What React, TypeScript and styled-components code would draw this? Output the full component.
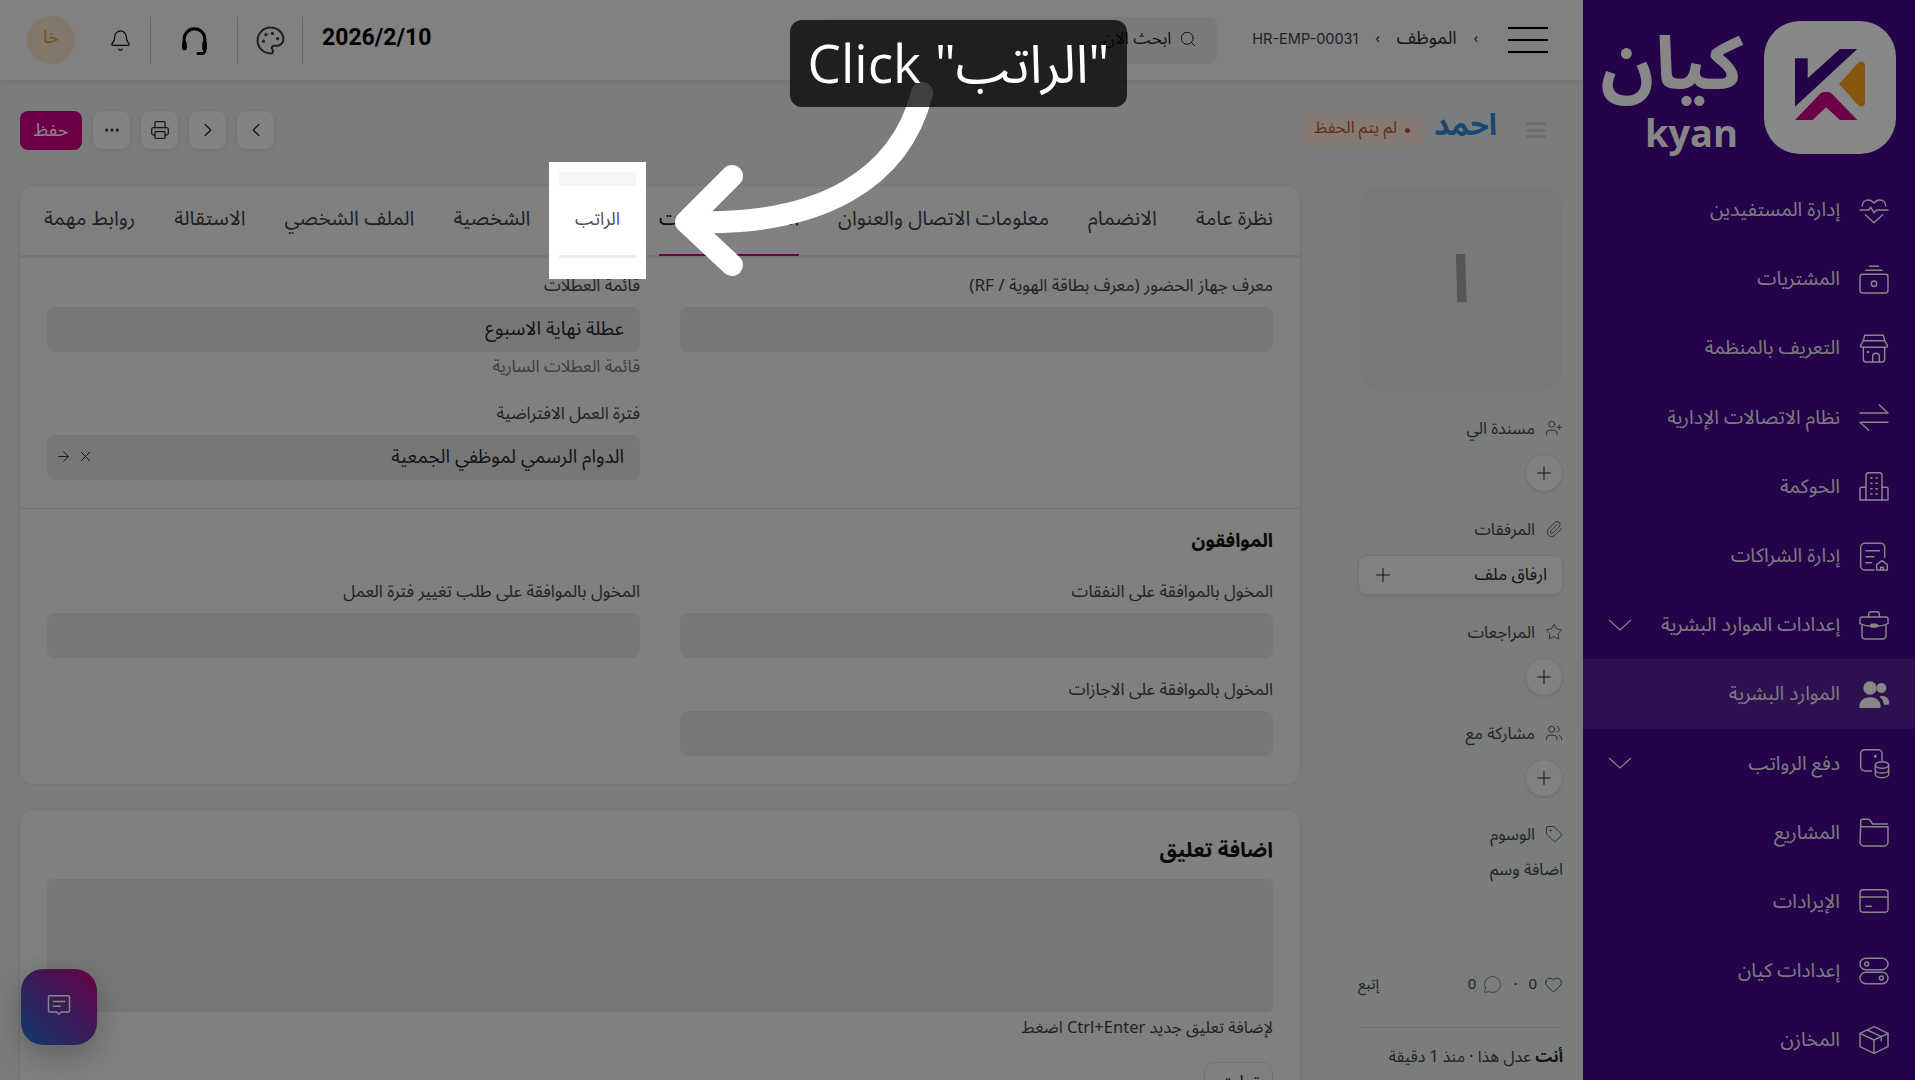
import React from "react";
import styled, { createGlobalStyle } from "styled-components";
import {
  ArrowRight,
  Bell,
  ChevronLeft,
  ChevronRight,
  Heart,
  MessageCircle,
  MoreHorizontal,
  Palette,
  Paperclip,
  Plus,
  Printer,
  Search,
  Star,
  Tag,
  UserPlus,
  Users,
  X,
} from "lucide-react";

const GlobalStyle = createGlobalStyle`
  html, body {
    margin: 0;
    padding: 0;
    height: 100%;
    overflow: hidden;
    direction: rtl;
    background: #e8ecea;
    font-family: "Noto Sans Arabic", "Noto Sans", "DejaVu Sans", sans-serif;
  }
  * { box-sizing: border-box; }
`;

const Svg = ({ children }: { children: React.ReactNode }) => (
  <svg
    width="32"
    height="32"
    viewBox="0 0 24 24"
    fill="none"
    stroke="currentColor"
    strokeWidth="1.1"
    strokeLinecap="round"
    strokeLinejoin="round"
  >
    {children}
  </svg>
);

const navItems = [
  {
    label: "إدارة المستفيدين",
    icon: (
      <Svg>
        <path d="M1.5 12h6.5l1.5-2 2.5 4 2-2h8.5" />
        <path d="M3.2 9C3.2 6 5.4 4.5 7.6 4.5c1.8 0 3.4 1 4.4 2.3 1-1.3 2.6-2.3 4.4-2.3 2.2 0 4.4 1.5 4.4 4.5" />
        <path d="M5.5 15.5l6.5 6 6.5-6" />
      </Svg>
    ),
  },
  {
    label: "المشتريات",
    icon: (
      <Svg>
        <path d="M8.5 2.5h7M6 5.5h12" />
        <rect x="1.5" y="8.5" width="21" height="14" rx="2" />
        <circle cx="12" cy="15.5" r="2" />
      </Svg>
    ),
  },
  {
    label: "التعريف بالمنظمة",
    icon: (
      <Svg>
        <path d="M5 2.5h14l1 4 2 3.5c.4 1-.2 1.5-1 1.5H3c-.8 0-1.4-.5-1-1.5L4 6.5z" />
        <path d="M4 6.5h16" />
        <path d="M4 11.5v9a2 2 0 0 0 2 2h12a2 2 0 0 0 2-2v-9" />
        <path d="M11 22.5v-4a2.5 2.5 0 0 1 5 0v4" />
        <circle cx="7.5" cy="15" r=".4" />
      </Svg>
    ),
  },
  {
    label: "نظام الاتصالات الإدارية",
    icon: (
      <Svg>
        <path d="M1.5 9h21l-6.5-6" />
        <path d="M22.5 16h-21l6.5 6" />
      </Svg>
    ),
  },
  {
    label: "الحوكمة",
    icon: (
      <Svg>
        <path d="M6 22.5V4a2 2 0 0 1 2-2h8a2 2 0 0 1 2 2v18.5" />
        <path d="M6 13H2.5a1 1 0 0 0-1 1v8.5h21V14a1 1 0 0 0-1-1H18" />
        <path d="M9.5 6h1M13.5 6h1M9.5 10h1M13.5 10h1M9.5 14h1M13.5 14h1M9.5 18h1M13.5 18h1" />
      </Svg>
    ),
  },
  {
    label: "إدارة الشراكات",
    icon: (
      <Svg>
        <path d="M12 22.5H5a3 3 0 0 1-3-3v-14a3 3 0 0 1 3-3h12a3 3 0 0 1 3 3V13" />
        <path d="M6 8h10M6 12.5h6M6 17h4" />
        <path d="M14 22.5v-4l4-3 4 3v4z" />
        <path d="M17 22.5v-2h2v2" />
      </Svg>
    ),
  },
  {
    label: "إعدادات الموارد البشرية",
    icon: (
      <Svg>
        <path d="M8 6V4a2 2 0 0 1 2-2h4a2 2 0 0 1 2 2v2" />
        <path d="M3 6h18a1.5 1.5 0 0 1 1.5 1.5V11c-3 1.5-6 2-8.5 2h-4c-2.5 0-5.5-.5-8.5-2V7.5A1.5 1.5 0 0 1 3 6z" />
        <path d="M3 12.5V20a2.5 2.5 0 0 0 2.5 2.5h13A2.5 2.5 0 0 0 21 20v-7.5" />
        <rect x="9.5" y="11.5" width="5" height="2" rx="1" fill="currentColor" />
      </Svg>
    ),
  },
  {
    label: "الموارد البشرية",
    active: true,
    icon: (
      <svg width="32" height="32" viewBox="0 0 24 24" fill="currentColor">
        <circle cx="9" cy="7.5" r="5" />
        <path d="M1 21.5c0-4.5 3.5-7 8-7s8 2.5 8 7c0 .5-.5 1-1 1H2c-.5 0-1-.5-1-1z" />
        <circle cx="17.5" cy="7.5" r="3.8" />
        <path d="M18.5 13.5c3 .3 5 2.5 5 5.5 0 .6-.4 1-1 1h-3c-.3-2.5-1.5-4.8-3.5-6 .8-.3 1.6-.5 2.5-.5z" />
      </svg>
    ),
  },
  {
    label: "دفع الرواتب",
    icon: (
      <Svg>
        <path d="M10 18H5a3 3 0 0 1-3-3V5a3 3 0 0 1 3-3h10a3 3 0 0 1 3 3v5" />
        <circle cx="13" cy="7" r=".6" fill="currentColor" />
        <ellipse cx="18" cy="13.5" rx="5" ry="2.5" />
        <path d="M13 13.5v7c0 1.4 2.2 2.5 5 2.5s5-1.1 5-2.5v-7M13 17c0 1.4 2.2 2.5 5 2.5s5-1.1 5-2.5" />
      </Svg>
    ),
  },
  {
    label: "المشاريع",
    icon: (
      <Svg>
        <path d="M2 8V4a1.5 1.5 0 0 1 1.5-1.5h5L11 6h11" />
        <path d="M2 8h20.5v11.5a3 3 0 0 1-3 3h-15a3 3 0 0 1-3-3z" />
      </Svg>
    ),
  },
  {
    label: "الإيرادات",
    icon: (
      <Svg>
        <rect x="1.5" y="3.5" width="21" height="17" rx="2.5" />
        <path d="M1.5 9h21M6 16h4" />
      </Svg>
    ),
  },
  {
    label: "إعدادات كيان",
    icon: (
      <Svg>
        <rect x="1.5" y="2.5" width="21" height="8.5" rx="4.25" />
        <rect x="1.5" y="13" width="21" height="8.5" rx="4.25" />
        <circle cx="6.5" cy="6.75" r="1.5" />
        <circle cx="17.5" cy="17.25" r="1.5" />
      </Svg>
    ),
  },
  {
    label: "المخازن",
    icon: (
      <Svg>
        <path d="M12 2l10.5 5v10L12 22 1.5 17V7z" />
        <path d="M1.5 7L12 12l10.5-5M12 12v10" />
        <path d="M7 4.5l10.5 5v3" />
      </Svg>
    ),
  },
];

const tabs = [
  "نظرة عامة",
  "الانضمام",
  "معلومات الاتصال والعنوان",
  "الحضور والإجازات",
  "الراتب",
  "الشخصية",
  "الملف الشخصي",
  "الاستقالة",
  "روابط مهمة",
];

const Expand = () => (
  <ExpandIcon viewBox="0 0 24 14" fill="none" stroke="currentColor" strokeWidth="1.2">
    <path d="M1 2l11 10L23 2" />
  </ExpandIcon>
);

const App = () => {
  return (
    <Page>
      <GlobalStyle />
      <Sidebar>
        <LogoRow>
          <LogoWords>
            <LogoArabic>كيان</LogoArabic>
            <LogoLatin>kyan</LogoLatin>
          </LogoWords>
          <LogoTile>
            <svg width="132" height="133" viewBox="0 0 132 133">
              <path d="M31 37.3h12.7v20L76 28h17.3L31 85.7z" fill="#44078c" />
              <path d="M75 63l19-21c2.5-2.5 7-1.5 7 2v38c0 3.5-4.5 5-7 2z" fill="#fba41c" />
              <path d="M31 99l25-26c3-3 9-3 12 0l25.3 26H76L62 86.3 48.7 99z" fill="#ca0086" />
            </svg>
          </LogoTile>
        </LogoRow>
        <Nav>
          {navItems.map((item, i) => (
            <NavItem key={i} $active={item.active}>
              <NavIcon>{item.icon}</NavIcon>
              <NavLabel>{item.label}</NavLabel>
              {(i === 6 || i === 8) && <Expand />}
            </NavItem>
          ))}
        </Nav>
      </Sidebar>

      <Main>
        <Topbar>
          <MenuLines>
            <span />
            <span />
            <span />
          </MenuLines>
          <Crumbs>
            <Sep>›</Sep>
            <span>الموظف</span>
            <Sep>›</Sep>
            <CrumbId>HR-EMP-00031</CrumbId>
          </Crumbs>
          <SearchBox>
            <Search size={18} strokeWidth={1.3} />
            <span>ابحث الان</span>
          </SearchBox>
          <DateText>2026/2/10</DateText>
          <ToolCell $width={65}>
            <Palette size={31} strokeWidth={1.6} color="#3c3c3c" />
          </ToolCell>
          <ToolCell $width={87}>
            <svg width="33" height="33" viewBox="0 0 24 24" fill="none" stroke="#000" strokeWidth="2.2" strokeLinecap="round">
              <path d="M4.5 14v-3a7.5 7.5 0 0 1 15 0v3" />
              <rect x="3" y="12.5" width="3.4" height="6.5" rx="1.4" fill="#000" stroke="none" />
              <rect x="17.6" y="12.5" width="3.4" height="6.5" rx="1.4" fill="#000" stroke="none" />
              <path d="M19.5 18v1.5a2 2 0 0 1-2 2h-3" />
            </svg>
          </ToolCell>
          <ToolCell $width={60}>
            <Bell size={23} strokeWidth={1.3} color="#111" />
          </ToolCell>
          <Avatar>خا</Avatar>
        </Topbar>

        <TitleRow>
          <TitleMenu>
            <span />
            <span />
            <span />
          </TitleMenu>
          <Title>احمد</Title>
          <Badge>
            <i />
            لم يتم الحفظ
          </Badge>
          <Actions>
            <IconButton>
              <ChevronLeft size={22} strokeWidth={1.5} />
            </IconButton>
            <IconButton>
              <ChevronRight size={22} strokeWidth={1.5} />
            </IconButton>
            <IconButton>
              <Printer size={20} strokeWidth={1.5} />
            </IconButton>
            <IconButton>
              <MoreHorizontal size={18} strokeWidth={2} />
            </IconButton>
            <SaveButton>حفظ</SaveButton>
          </Actions>
        </TitleRow>

        <Content>
          <FormSide>
            <AvatarBox>ا</AvatarBox>
            <SideGroup>
              <SideLabel>
                <UserPlus size={18} strokeWidth={1.1} />
                مسندة الي
              </SideLabel>
              <PlusCircle>
                <Plus size={22} strokeWidth={1.1} />
              </PlusCircle>
            </SideGroup>
            <SideGroup>
              <SideLabel>
                <Paperclip size={18} strokeWidth={1.1} />
                المرفقات
              </SideLabel>
              <AttachButton>
                ارفاق ملف
                <Plus size={22} strokeWidth={1.1} />
              </AttachButton>
            </SideGroup>
            <SideGroup>
              <SideLabel>
                <Star size={18} strokeWidth={1.1} />
                المراجعات
              </SideLabel>
              <PlusCircle>
                <Plus size={22} strokeWidth={1.1} />
              </PlusCircle>
            </SideGroup>
            <SideGroup>
              <SideLabel>
                <Users size={18} strokeWidth={1.1} />
                مشاركة مع
              </SideLabel>
              <PlusCircle>
                <Plus size={22} strokeWidth={1.1} />
              </PlusCircle>
            </SideGroup>
            <SideGroup>
              <SideLabel>
                <Tag size={18} strokeWidth={1.1} />
                الوسوم
              </SideLabel>
              <AddTag>اضافة وسم</AddTag>
            </SideGroup>
            <Stats>
              <Heart size={19} strokeWidth={1.1} />
              <span>0</span>
              <Dot>·</Dot>
              <MessageCircle size={19} strokeWidth={0.8} />
              <span>0</span>
              <Follow>إتبع</Follow>
            </Stats>
            <Activity>
              <b>أنت</b> عدل هذا · منذ 1 دقيقة
            </Activity>
          </FormSide>

          <Forms>
            <Card>
              <Tabs>
                {tabs.map((t, i) => (
                  <Tab key={t} $active={i === 3}>
                    {t}
                  </Tab>
                ))}
              </Tabs>
              <Section $top={18} $bottom={28}>
                <FieldColumn>
                  <Field>
                    <FieldLabel>معرف جهاز الحضور (معرف بطاقة الهوية / RF)</FieldLabel>
                    <Input />
                  </Field>
                </FieldColumn>
                <FieldColumn $gap={27}>
                  <Field>
                    <FieldLabel>قائمة العطلات</FieldLabel>
                    <Input>عطلة نهاية الاسبوع</Input>
                    <Helper>قائمة العطلات السارية</Helper>
                  </Field>
                  <Field>
                    <FieldLabel>فترة العمل الافتراضية</FieldLabel>
                    <Input>
                      الدوام الرسمي لموظفي الجمعية
                      <InputIcons>
                        <X size={17} strokeWidth={1.3} />
                        <ArrowRight size={17} strokeWidth={1.3} />
                      </InputIcons>
                    </Input>
                  </Field>
                </FieldColumn>
              </Section>
              <Divider />
              <SectionTitle>الموافقون</SectionTitle>
              <Section $top={30} $bottom={28}>
                <FieldColumn>
                  <Field>
                    <FieldLabel>المخول بالموافقة على النفقات</FieldLabel>
                    <Input />
                  </Field>
                  <Field>
                    <FieldLabel>المخول بالموافقة على الاجازات</FieldLabel>
                    <Input />
                  </Field>
                </FieldColumn>
                <FieldColumn>
                  <Field>
                    <FieldLabel>المخول بالموافقة على طلب تغيير فترة العمل</FieldLabel>
                    <Input />
                  </Field>
                </FieldColumn>
              </Section>
            </Card>

            <CommentCard>
              <CommentTitle>اضافة تعليق</CommentTitle>
              <CommentArea />
              <CommentHint>لإضافة تعليق جديد Ctrl+Enter اضغط</CommentHint>
              <CommentButton>تعليق</CommentButton>
            </CommentCard>
          </Forms>
        </Content>
      </Main>

      <ChatFab>
        <svg width="28" height="28" viewBox="0 0 24 24" fill="none" stroke="#fff" strokeWidth="1.3" strokeLinejoin="round" strokeLinecap="round">
          <path d="M4 4h16a1 1 0 0 1 1 1v12a1 1 0 0 1-1 1h-6l-2 2-2-2H4a1 1 0 0 1-1-1V5a1 1 0 0 1 1-1z" />
          <path d="M7 9h10M7 13h6" />
        </svg>
      </ChatFab>

      <Dim />
      <Spotlight>
        <SpotBand />
        <SpotLabel>الراتب</SpotLabel>
        <SpotLine />
      </Spotlight>
      <GuideArrow viewBox="0 0 1915 1080" fill="none" stroke="#fff" strokeWidth="22" strokeLinecap="round" strokeLinejoin="round">
        <path d="M922 93C900 180 820 225 696 222" />
        <path d="M732 176L686 222L732 265" />
      </GuideArrow>
      <Callout>Click "الراتب"</Callout>
    </Page>
  );
};

const Page = styled.div`
  position: relative;
  display: flex;
  width: 100%;
  height: 100vh;
  overflow: hidden;
  background: #e8ecea;
`;

const Sidebar = styled.aside`
  flex: 0 0 332px;
  display: flex;
  flex-direction: column;
  background: #44078c;
  color: #fff;
`;

const LogoRow = styled.div`
  display: flex;
  flex-shrink: 0;
  align-items: flex-start;
  flex-direction: row-reverse;
  justify-content: flex-end;
  gap: 24px;
  padding: 21px 19px 0 0;
  height: 175px;
`;

const LogoTile = styled.div`
  width: 132px;
  height: 133px;
  border-radius: 36px;
  background: #fff;
`;

const LogoWords = styled.div`
  display: flex;
  flex-direction: column;
  align-items: flex-start;
  width: 137px;
  color: #fff;
`;

const LogoArabic = styled.div`
  font-size: 74px;
  font-weight: 700;
  line-height: 90px;
  align-self: center;
`;

const LogoLatin = styled.div`
  font-family: "Open Sans", sans-serif;
  font-size: 38px;
  font-weight: 700;
  line-height: 36px;
  margin: 3px 2px 0 0;
  direction: ltr;
`;

const Nav = styled.nav`
  display: flex;
  flex-direction: column;
`;

const NavItem = styled.div<{ $active?: boolean }>`
  display: flex;
  flex-shrink: 0;
  align-items: center;
  height: 69.2px;
  padding: 0 25px 0 0;
  gap: 18px;
  background: ${(p) => (p.$active ? "rgba(255,255,255,.1)" : "transparent")};
`;

const NavIcon = styled.div`
  display: flex;
  width: 32px;
`;

const NavLabel = styled.div`
  flex: 1;
  font-size: 19.5px;
  opacity: 0.9;
`;

const ExpandIcon = styled.svg`
  width: 24px;
  height: 14px;
  margin-left: 25px;
`;

const Main = styled.main`
  flex: 1;
  min-width: 0;
  display: flex;
  flex-direction: column;
`;

const Topbar = styled.header`
  display: flex;
  flex-shrink: 0;
  align-items: center;
  height: 80px;
  padding: 0 35px 0 27px;
  background: #f3f3f3;
  box-shadow: 0 1px 6px rgba(0, 0, 0, 0.1);
  color: #1f272e;
`;

const MenuLines = styled.div`
  display: flex;
  flex-direction: column;
  gap: 10.5px;
  width: 40px;
  span {
    height: 1.5px;
    background: #000;
  }
`;

const Crumbs = styled.div`
  display: flex;
  align-items: center;
  gap: 17px;
  margin-right: 30px;
  padding-bottom: 4px;
  font-size: 18px;
`;

const Sep = styled.span`
  font-size: 14px;
`;

const CrumbId = styled.span`
  font-family: Inter, sans-serif;
  font-size: 14.5px;
  color: #3a4148;
`;

const SearchBox = styled.div`
  display: flex;
  align-items: center;
  gap: 8px;
  width: 396px;
  height: 47px;
  margin-right: 35px;
  padding: 0 20px 2px;
  border-radius: 8px;
  background: #e9e9e9;
  font-size: 17px;
`;

const DateText = styled.div`
  margin-right: auto;
  font-family: "Roboto", sans-serif;
  font-size: 23px;
  font-weight: 700;
  color: #000;
  direction: ltr;
  padding: 0 0 6px 19px;
`;

const ToolCell = styled.div<{ $width: number }>`
  display: flex;
  align-items: center;
  justify-content: center;
  width: ${(p) => p.$width}px;
  height: 47px;
  border-right: 1px solid #c6c6c6;
`;

const Avatar = styled.div`
  display: flex;
  align-items: center;
  justify-content: center;
  width: 48px;
  height: 48px;
  margin-right: 16px;
  padding-bottom: 6px;
  border-radius: 50%;
  background: #f4e2c6;
  color: #d29a35;
  font-size: 18px;
`;

const TitleRow = styled.div`
  display: flex;
  flex-shrink: 0;
  align-items: center;
  height: 106px;
  padding: 0 37px 6px 20px;
`;

const TitleMenu = styled.div`
  display: flex;
  flex-direction: column;
  gap: 3.5px;
  width: 20px;
  span {
    height: 3px;
    border-radius: 2px;
    background: #cfd0d8;
  }
`;

const Title = styled.div`
  margin: -8px 29px 0 0;
  font-size: 30px;
  font-weight: 700;
  line-height: 40px;
  color: #2e88d6;
`;

const Badge = styled.div`
  display: flex;
  align-items: center;
  gap: 8px;
  height: 32px;
  margin-right: 11px;
  padding: 0 13px 5px;
  border-radius: 8px;
  background: #fbe4dc;
  color: #c2541c;
  font-size: 16.5px;
  i {
    width: 5px;
    height: 5px;
    margin-top: 5px;
    border-radius: 50%;
    background: #c2541c;
  }
`;

const Actions = styled.div`
  display: flex;
  align-items: center;
  gap: 9px;
  margin-right: auto;
`;

const IconButton = styled.div`
  display: flex;
  align-items: center;
  justify-content: center;
  width: 39px;
  height: 40px;
  border-radius: 10px;
  background: #f5f5f5;
  border: 1px solid #e0e0e0;
  box-shadow: 0 1px 2px rgba(0, 0, 0, 0.08);
  color: #2c2c2c;
`;

const SaveButton = styled.div`
  display: flex;
  align-items: center;
  justify-content: center;
  width: 62px;
  height: 39px;
  margin-right: 1px;
  border-radius: 8px;
  background: #ca0086;
  color: #fff;
  font-size: 18px;
`;

const Content = styled.div`
  display: flex;
  flex-shrink: 0;
  align-items: flex-start;
  gap: 58px;
  padding: 0 20px;
`;

const FormSide = styled.div`
  flex: 0 0 205px;
  display: flex;
  flex-direction: column;
  gap: 27px;
  padding-top: 1px;
  color: #3a4148;
`;

const AvatarBox = styled.div`
  display: flex;
  align-items: center;
  justify-content: center;
  width: 202px;
  height: 204px;
  margin-right: 1px;
  padding-bottom: 16px;
  border-radius: 20px;
  background: #e4e4e4;
  color: #9da2ad;
  font-size: 66px;
  font-weight: 700;
`;

const SideGroup = styled.div`
  display: flex;
  flex-direction: column;
  gap: 16px;
`;

const SideLabel = styled.div`
  display: flex;
  align-items: center;
  gap: 10px;
  height: 20px;
  font-size: 16.5px;
`;

const PlusCircle = styled.div`
  display: flex;
  align-items: center;
  justify-content: center;
  width: 38px;
  height: 38px;
  border-radius: 50%;
  background: #f3f3f3;
  border: 1px solid #dcdcdc;
  box-shadow: 0 1px 2px rgba(0, 0, 0, 0.08);
  color: #1f272e;
`;

const AttachButton = styled.div`
  display: flex;
  align-items: center;
  justify-content: space-between;
  height: 40px;
  padding: 0 15px 0 13px;
  border-radius: 8px;
  background: #f3f3f3;
  border: 1px solid #dcdcdc;
  box-shadow: 0 1px 2px rgba(0, 0, 0, 0.08);
  color: #1f272e;
  font-size: 17px;
`;

const AddTag = styled.div`
  height: 20px;
  font-size: 16.5px;
  line-height: 20px;
`;

const Stats = styled.div`
  display: flex;
  align-items: center;
  gap: 7px;
  height: 20px;
  margin-top: 67px;
  font-size: 15px;
`;

const Dot = styled.span`
  margin: 0 4px;
`;

const Follow = styled.span`
  margin-right: auto;
`;

const Activity = styled.div`
  margin-top: 6px;
  padding-top: 19px;
  border-top: 1px solid #d6d6d6;
  font-size: 16px;
  line-height: 20px;
  b {
    color: #1f272e;
  }
`;

const Forms = styled.div`
  flex: 1;
  min-width: 0;
  display: flex;
  flex-direction: column;
  gap: 26px;
`;

const Card = styled.section`
  display: flex;
  flex-direction: column;
  border-radius: 14px;
  background: #f2f2f2;
  box-shadow: 0 0 3px rgba(0, 0, 0, 0.12);
`;

const Tabs = styled.div`
  display: flex;
  gap: 39px;
  height: 72px;
  padding: 0 27px;
  border-bottom: 3px solid #e0e0e0;
`;

const Tab = styled.div<{ $active?: boolean }>`
  display: flex;
  align-items: center;
  height: 70px;
  padding-bottom: 4px;
  font-size: 20.3px;
  white-space: nowrap;
  color: ${(p) => (p.$active ? "#111" : "#3a4148")};
  border-bottom: 2px solid ${(p) => (p.$active ? "#ca0086" : "transparent")};
`;

const Section = styled.div<{ $top: number; $bottom: number }>`
  display: grid;
  grid-template-columns: 1fr 1fr;
  gap: 40px;
  padding: ${(p) => p.$top}px 27px ${(p) => p.$bottom}px;
`;

const FieldColumn = styled.div<{ $gap?: number }>`
  display: flex;
  flex-direction: column;
  gap: ${(p) => p.$gap ?? 22}px;
`;

const Field = styled.div`
  display: flex;
  flex-direction: column;
`;

const FieldLabel = styled.label`
  height: 20px;
  margin-bottom: 11px;
  font-size: 17px;
  line-height: 20px;
  color: #3a4148;
`;

const Input = styled.div`
  position: relative;
  display: flex;
  align-items: center;
  height: 45px;
  padding: 0 16px 2px;
  border-radius: 8px;
  background: #e1e1e1;
  color: #1f272e;
  font-size: 19px;
`;

const InputIcons = styled.div`
  display: flex;
  align-items: center;
  gap: 5px;
  margin-right: auto;
  margin-left: -8px;
`;

const Helper = styled.div`
  margin-top: 5px;
  height: 20px;
  font-size: 17px;
  line-height: 20px;
  color: #6c7680;
`;

const Divider = styled.hr`
  width: 100%;
  height: 1px;
  margin: 0;
  border: 0;
  background: #dcdcdc;
`;

const SectionTitle = styled.h3`
  margin: 21px 27px 0;
  font-size: 19px;
  font-weight: 700;
  line-height: 22px;
  color: #111;
`;

const CommentCard = styled(Card)`
  padding: 28px 27px 40px;
`;

const CommentTitle = styled.h2`
  margin: 0;
  font-size: 21px;
  font-weight: 700;
  line-height: 24px;
  color: #111;
`;

const CommentArea = styled.div`
  height: 133px;
  margin-top: 17px;
  border-radius: 6px;
  background: #e1e1e1;
`;

const CommentHint = styled.div`
  margin-top: 6px;
  height: 20px;
  font-size: 16.5px;
  line-height: 20px;
  color: #3a4148;
`;

const CommentButton = styled.div`
  display: flex;
  align-items: center;
  justify-content: center;
  width: 69px;
  height: 40px;
  margin-top: 24px;
  border: 1px solid #dcdcdc;
  border-radius: 10px;
  color: #1f272e;
  font-size: 18px;
`;

const ChatFab = styled.div`
  position: absolute;
  left: 21px;
  top: 969px;
  display: flex;
  align-items: center;
  justify-content: center;
  width: 76px;
  height: 76px;
  padding-bottom: 4px;
  border-radius: 22px;
  background: linear-gradient(45deg, #1f6fd0 0%, #6a35a8 50%, #ca0086 100%);
  box-shadow: 0 10px 30px rgba(0, 0, 0, 0.25);
`;

const Dim = styled.div`
  position: absolute;
  inset: 0;
  background: rgba(0, 0, 0, 0.47);
`;

const Spotlight = styled.div`
  position: absolute;
  left: 549px;
  top: 162px;
  display: flex;
  flex-direction: column;
  width: 97px;
  height: 117px;
  padding: 10px 10px 21px;
  background: #fff;
`;

const SpotBand = styled.div`
  height: 14px;
  background: #f5f7f6;
`;

const SpotLabel = styled.div`
  flex: 1;
  display: flex;
  align-items: center;
  justify-content: center;
  padding-bottom: 4px;
  font-size: 18px;
  color: #4a5058;
`;

const SpotLine = styled.div`
  height: 3px;
  background: #eeeeee;
`;

const GuideArrow = styled.svg`
  position: absolute;
  left: 0;
  top: 0;
  width: 1915px;
  height: 1080px;
  pointer-events: none;
`;

const Callout = styled.div`
  position: absolute;
  left: 790px;
  top: 20px;
  display: flex;
  align-items: center;
  justify-content: center;
  width: 337px;
  height: 87px;
  padding-top: 4px;
  border-radius: 12px;
  background: rgba(0, 0, 0, 0.75);
  color: #fff;
  font-family: "Open Sans", "Noto Sans Arabic", "DejaVu Sans", sans-serif;
  font-size: 53px;
  direction: ltr;
  white-space: nowrap;
`;

export default App;
